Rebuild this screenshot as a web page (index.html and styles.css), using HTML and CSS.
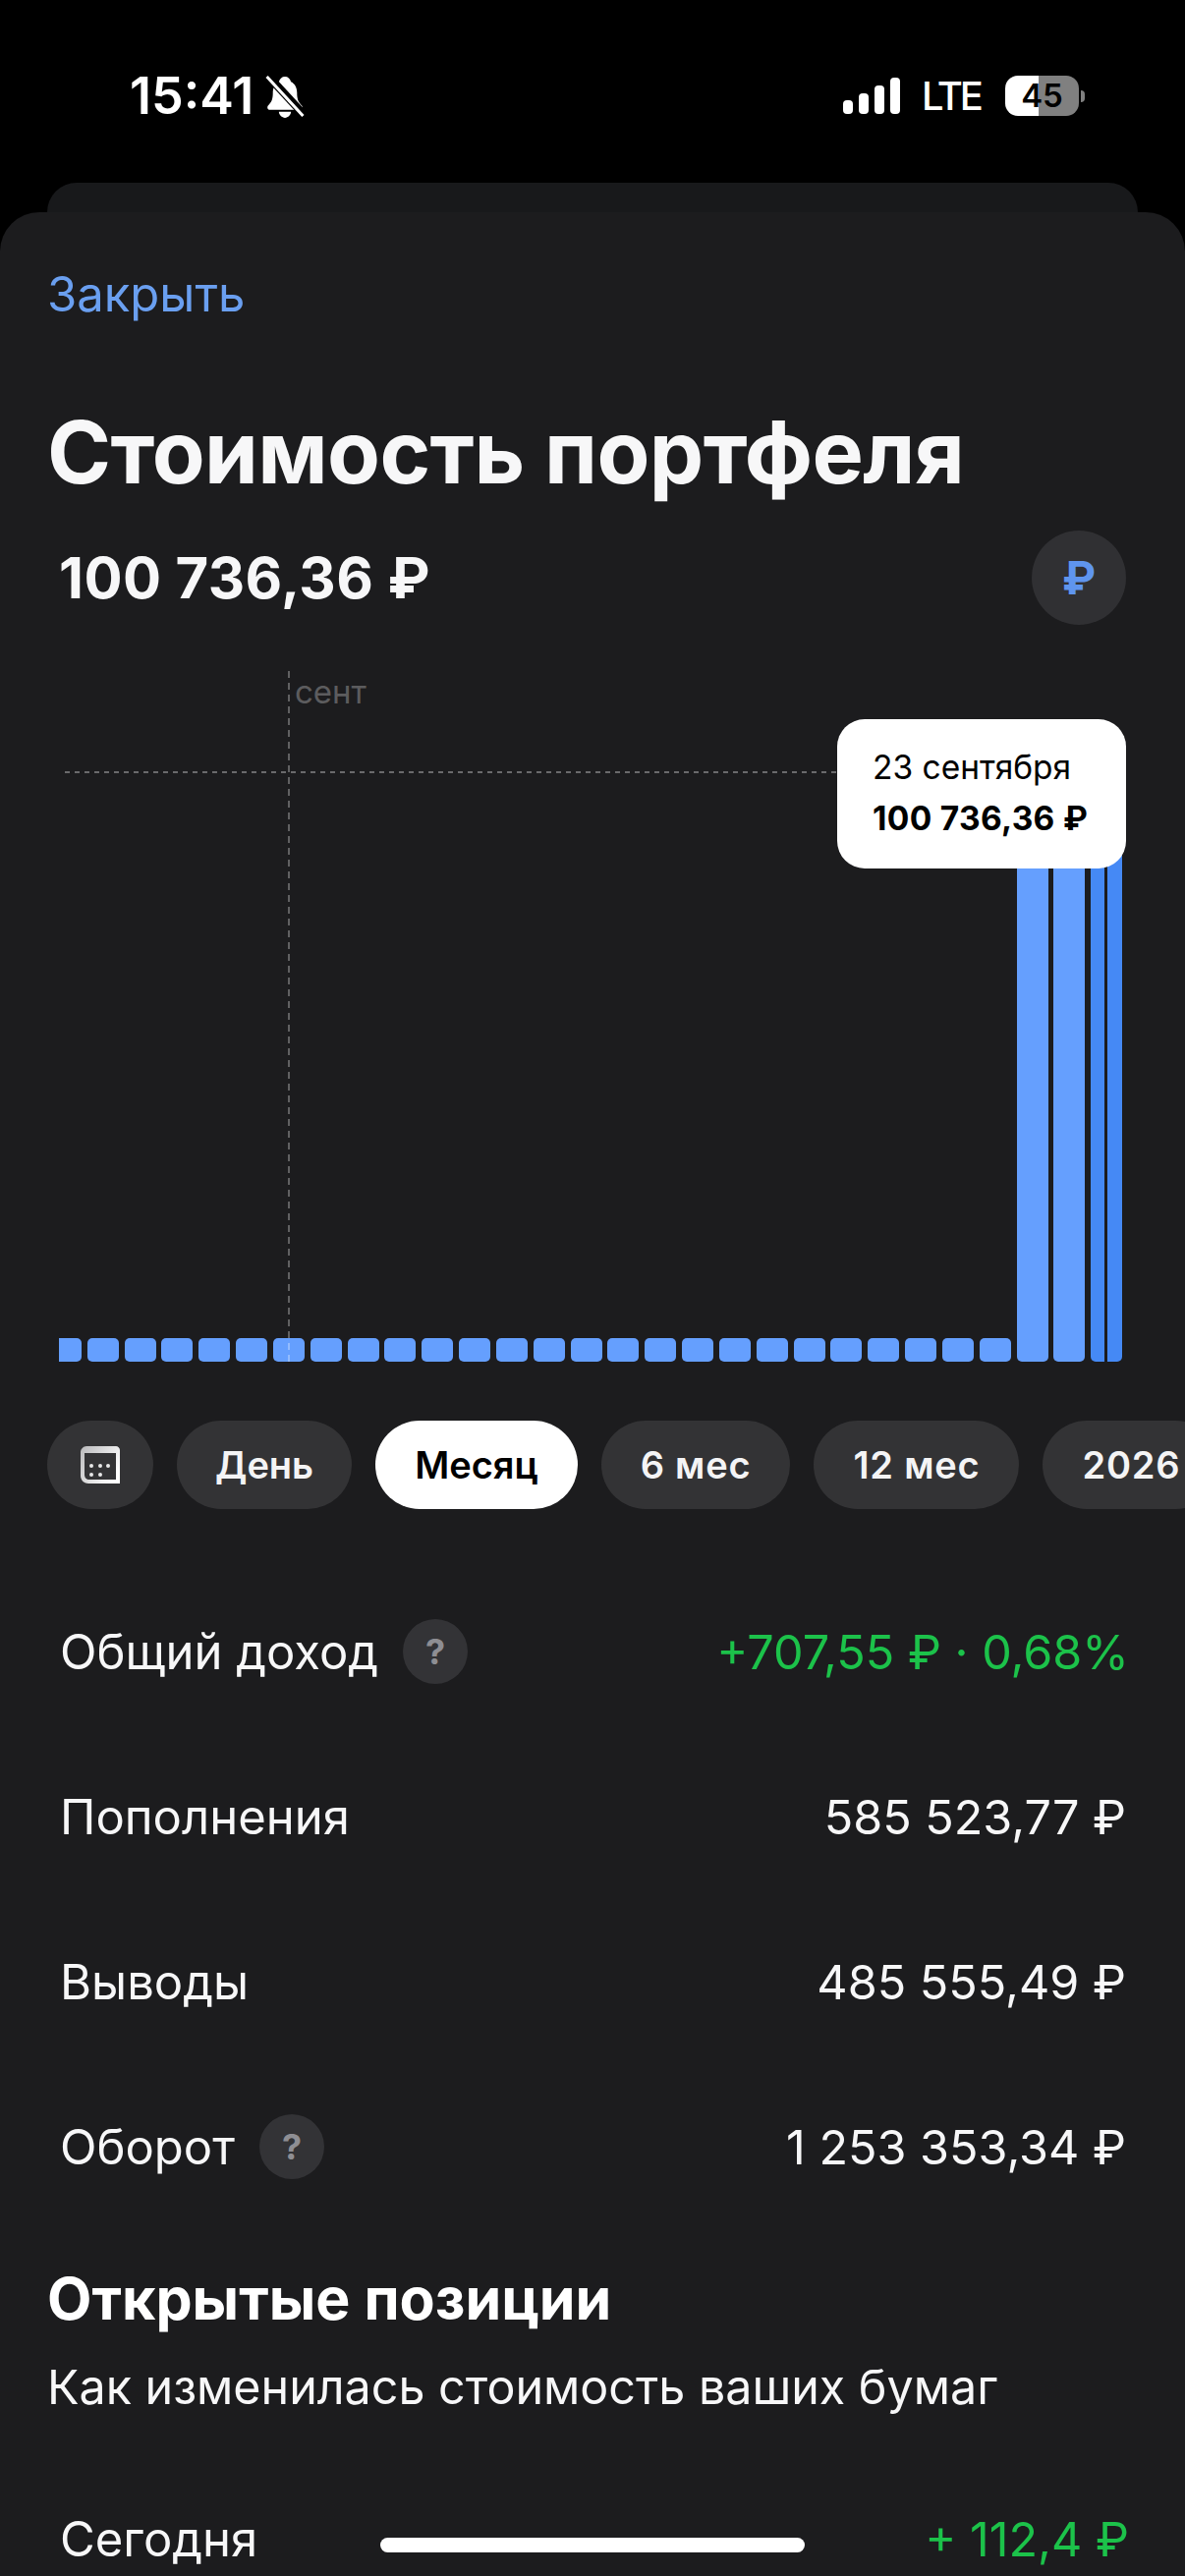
FILE: index.html
```html
<!DOCTYPE html>
<html lang="ru">

<head>
    <meta charset="UTF-8">
    <meta name="viewport" content="width=device-width, initial-scale=1.0">
    <title>Стоимость портфеля</title>
    <link rel="stylesheet" href="styles.css">
</head>

<body>
    <div class="status-bar">
        <div class="status-left">
            <span class="time">15:41</span>
            <svg class="bell" viewBox="0 0 38 42">
                <path fill="#fff" d="M19 1c3 0 5 2 6 5 4 2 6 6 6 11 0 6 1 9 5 13 1 2 0 4-2 4H4c-2 0-3-2-2-4 4-4 5-7 5-13 0-5 2-9 6-11 1-3 3-5 6-5z" />
                <path fill="#fff" d="M13 36h12c0 3-3 6-6 6s-6-3-6-6z" />
                <path stroke="#000" stroke-width="8" d="M2 0l36 39" />
                <path stroke="#fff" stroke-width="3" d="M1 1l36 39" />
            </svg>
        </div>
        <div class="status-right">
            <svg class="signal" viewBox="0 0 58 37">
                <rect x="0" y="23" width="10" height="14" rx="4" />
                <rect x="16" y="16" width="10" height="21" rx="4" />
                <rect x="32" y="8" width="10" height="29" rx="4" />
                <rect x="48" y="0" width="10" height="37" rx="4" />
            </svg>
            <span class="lte">LTE</span>
            <div class="battery">45</div>
            <div class="battery-nub"></div>
        </div>
    </div>

    <div class="back-sheet"></div>

    <div class="sheet">
        <a class="close-link">Закрыть</a>
        <h1>Стоимость портфеля</h1>

        <div class="value-row">
            <span class="value">100 736,36 ₽</span>
            <div class="currency-btn">₽</div>
        </div>

        <div class="chart">
            <div class="bars">
                <div class="bar bar-first"></div>
                <div class="bar"></div><div class="bar"></div><div class="bar"></div><div class="bar"></div><div class="bar"></div>
                <div class="bar"></div><div class="bar"></div><div class="bar"></div><div class="bar"></div><div class="bar"></div>
                <div class="bar"></div><div class="bar"></div><div class="bar"></div><div class="bar"></div><div class="bar"></div>
                <div class="bar"></div><div class="bar"></div><div class="bar"></div><div class="bar"></div><div class="bar"></div>
                <div class="bar"></div><div class="bar"></div><div class="bar"></div><div class="bar"></div><div class="bar"></div>
                <div class="bar bar-tall"></div>
                <div class="bar bar-tall"></div>
                <div class="bar-pair">
                    <div class="bar bar-tall bar-dark bar-left"></div>
                    <div class="bar bar-tall bar-dark bar-right"></div>
                </div>
            </div>
            <div class="guide-v"></div>
            <div class="guide-h"></div>
            <span class="month-label">сент</span>
            <div class="tooltip">
                <div class="tooltip-date">23 сентября</div>
                <div class="tooltip-value">100 736,36 ₽</div>
            </div>
        </div>

        <div class="periods">
            <div class="pill pill-icon">
                <svg class="calendar" viewBox="0 0 40 38">
                    <defs>
                        <linearGradient id="cal-fill" x1="0" y1="0" x2="1" y2="0.6">
                            <stop offset="0" stop-color="#b9b9bb" />
                            <stop offset="1" stop-color="#fff" />
                        </linearGradient>
                    </defs>
                    <path fill="url(#cal-fill)" fill-rule="evenodd" d="M6 0h30c2 0 4 2 4 4v34H8c-4 0-8-3-8-8V6c0-3 3-6 6-6zM4 7v22c0 3 2 5 5 5h27V7z" />
                    <circle cx="11" cy="20" r="2" fill="#e8e8e8" /><circle cx="20" cy="20" r="2" fill="#e8e8e8" /><circle cx="28" cy="20" r="2" fill="#e8e8e8" />
                    <circle cx="11" cy="29" r="2" fill="#e8e8e8" /><circle cx="20" cy="29" r="2" fill="#e8e8e8" />
                </svg>
            </div>
            <div class="pill pill-day">День</div>
            <div class="pill pill-active">Месяц</div>
            <div class="pill pill-num">6 мес</div>
            <div class="pill pill-num">12 мес</div>
            <div class="pill pill-num">2026</div>
        </div>

        <div class="stats">
            <div class="stat-row">
                <div class="stat-name">Общий доход <span class="help">?</span></div>
                <div class="green">+707,55 ₽ · 0,68%</div>
            </div>
            <div class="stat-row">
                <div class="stat-name">Пополнения</div>
                <div>585 523,77 ₽</div>
            </div>
            <div class="stat-row">
                <div class="stat-name">Выводы</div>
                <div>485 555,49 ₽</div>
            </div>
            <div class="stat-row">
                <div class="stat-name">Оборот <span class="help">?</span></div>
                <div>1 253 353,34 ₽</div>
            </div>
        </div>

        <h2>Открытые позиции</h2>
        <p class="subtitle">Как изменилась стоимость ваших бумаг</p>

        <div class="stat-row today-row">
            <div class="stat-name">Сегодня</div>
            <div class="green">+ 112,4 ₽</div>
        </div>

        <div class="home-indicator"></div>
    </div>
</body>

</html>
```

FILE: styles.css
```css
* {
    box-sizing: border-box;
}

body {
    font-family: Inter, "Noto Sans", sans-serif;
    background-color: #000;
    color: #fff;
    margin: 0;
    padding: 0;
    height: 2622px;
    overflow: hidden;
    display: flex;
    flex-direction: column;
}

.status-bar {
    height: 186px;
    padding: 72px 102px 0 132px;
    display: flex;
    justify-content: space-between;
    align-items: flex-start;
}

.status-left {
    display: flex;
    align-items: center;
    gap: 12px;
}

.time {
    font-size: 52px;
    font-weight: 600;
    line-height: 52px;
}

.bell {
    width: 40px;
    height: 43px;
}

.status-right {
    display: flex;
    align-items: center;
    padding-top: 5px;
}

.signal {
    width: 58px;
    height: 37px;
    fill: #fff;
    margin-right: 22px;
}

.lte {
    font-size: 40px;
    font-weight: 500;
    line-height: 40px;
    letter-spacing: -3px;
    margin-right: 25px;
}

.battery {
    width: 75px;
    height: 41px;
    border-radius: 13px;
    background: linear-gradient(to right, #fff 45%, #808080 45%);
    color: #000;
    font-size: 33px;
    font-weight: 600;
    line-height: 41px;
    text-align: center;
}

.battery-nub {
    width: 4px;
    height: 12px;
    margin-left: 2px;
    background-color: #808080;
    border-radius: 0 6px 6px 0;
}

.back-sheet {
    height: 30px;
    margin: 0 48px;
    background-color: #18191b;
    border-radius: 30px 30px 0 0;
}

.sheet {
    flex: 1;
    position: relative;
    overflow: hidden;
    background-color: #1c1c1e;
    border-radius: 40px 40px 0 0;
    padding-top: 54px;
}

.close-link {
    display: block;
    margin-left: 48px;
    color: #6a9ff0;
    font-size: 49px;
    line-height: 60px;
}

h1 {
    margin: 80px 0 0 48px;
    font-size: 88px;
    font-weight: 700;
    letter-spacing: -0.6px;
    line-height: 100px;
    color: #f7f7f8;
}

.value-row {
    margin-top: 30px;
    padding: 0 60px 0 60px;
    height: 96px;
    display: flex;
    justify-content: space-between;
    align-items: center;
}

.value {
    font-size: 58px;
    font-weight: 700;
    letter-spacing: 0.4px;
    color: #f7f7f8;
}

.currency-btn {
    width: 96px;
    height: 96px;
    border-radius: 50%;
    background-color: #303033;
    color: #5f95ee;
    font-size: 46px;
    font-weight: 700;
    display: flex;
    align-items: center;
    justify-content: center;
}

.chart {
    position: relative;
    margin: 47px 60px 0 60px;
    height: 703px;
}

.bars {
    height: 100%;
    display: flex;
    align-items: flex-end;
    gap: 5.84px;
}

.bar {
    flex: 0 0 32px;
    height: 24px;
    background-color: #659ffe;
    border-radius: 5px;
}

.bar-first {
    flex-basis: 23px;
    border-radius: 0 5px 5px 0;
}

.bar-tall {
    height: 526px;
}

.bar-pair {
    display: flex;
    gap: 3px;
}

.bar-dark {
    background-color: #4589f5;
}

.bar-left {
    flex-basis: 14px;
    border-radius: 5px 0 0 5px;
}

.bar-right {
    flex-basis: 15px;
    border-radius: 0 5px 5px 0;
}

.guide-v {
    position: absolute;
    left: 233px;
    top: 0;
    bottom: 0;
    width: 2px;
    background: repeating-linear-gradient(to bottom, rgba(255, 255, 255, 0.3) 0 7px, transparent 7px 12px);
}

.guide-h {
    position: absolute;
    left: 6px;
    right: 200px;
    top: 102px;
    height: 2px;
    background: repeating-linear-gradient(to right, #6a6a6c 0 5px, transparent 5px 10px);
}

.month-label {
    position: absolute;
    left: 240px;
    top: 1px;
    font-size: 33px;
    line-height: 40px;
    color: #5c5c5e;
}

.tooltip {
    position: absolute;
    right: 0;
    top: 49px;
    width: 294px;
    height: 152px;
    padding: 23px 0 0 36px;
    background-color: #fff;
    border-radius: 28px;
    color: #000;
    font-size: 33.5px;
    line-height: 52px;
}

.tooltip-value {
    font-weight: 700;
    letter-spacing: 0.3px;
}

.periods {
    margin-top: 60px;
    padding-left: 48px;
    display: flex;
    gap: 24px;
}

.pill {
    flex: none;
    height: 90px;
    padding: 0 40px;
    border-radius: 45px;
    background-color: #333335;
    color: #f4f4f5;
    font-size: 38px;
    font-weight: 600;
    display: flex;
    align-items: center;
}

.pill-icon {
    width: 108px;
    padding: 0;
    justify-content: center;
}

.pill-day {
    padding: 0 39px;
}

.pill-num {
    letter-spacing: 0.8px;
}

.pill-active {
    background-color: #fff;
    color: #000;
}

.calendar {
    width: 40px;
    height: 38px;
}

.stats {
    margin-top: 61px;
}

.stat-row {
    height: 168px;
    padding: 0 60px 0 61px;
    display: flex;
    justify-content: space-between;
    align-items: center;
    font-size: 48.5px;
    color: #f7f7f8;
}

.stat-name {
    display: flex;
    align-items: center;
    gap: 25px;
    font-size: 49px;
}

.help {
    width: 66px;
    height: 66px;
    border-radius: 50%;
    background-color: #333336;
    color: #8e8e93;
    font-size: 36px;
    font-weight: 700;
    display: flex;
    align-items: center;
    justify-content: center;
}

.green {
    color: #1cc24a;
    margin-right: -3px;
}

h2 {
    margin: 36px 0 0 48px;
    font-size: 59px;
    font-weight: 700;
    line-height: 70px;
}

.subtitle {
    margin: 25px 0 0 48px;
    font-size: 48.4px;
    line-height: 60px;
    color: #f7f7f8;
}

.today-row {
    margin-top: 40px;
}

.home-indicator {
    position: absolute;
    left: 387px;
    bottom: 24px;
    width: 432px;
    height: 15px;
    border-radius: 8px;
    background-color: #fff;
}
```
